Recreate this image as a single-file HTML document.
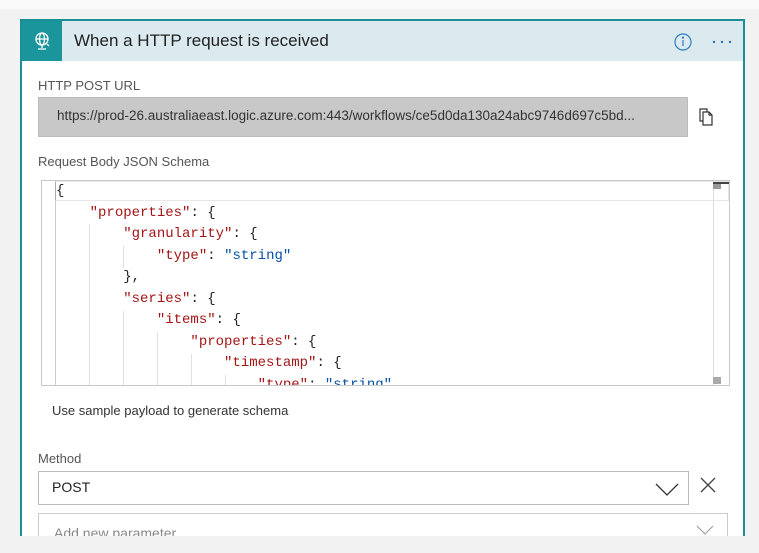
<!DOCTYPE html>
<html><head><meta charset="utf-8"><style>
*{margin:0;padding:0;box-sizing:border-box}
html,body{width:759px;height:553px;overflow:hidden}
body{background:#f2f2f2;position:relative;font-family:"Segoe UI","Liberation Sans",sans-serif}
.top{position:absolute;left:0;top:0;width:759px;height:9px;background:#fafafa}
.card{position:absolute;left:20px;top:19px;width:725px;height:517px;background:#fff;border:2px solid #1b8f96;border-bottom:none;overflow:hidden}
.hdr{position:absolute;left:0;top:0;width:721px;height:40px;background:#dbeaee}
.ico{position:absolute;left:0;top:0;width:40px;height:40px;background:#1b959c}
.title{position:absolute;left:52px;top:10px;font-size:17px;color:#222}
.abs{position:absolute}
.lbl{font-size:13px;color:#555}
.url{left:16px;top:76px;width:650px;height:40px;background:#c8c8c8;border:1px solid #bbb;font-size:13.5px;color:#333;padding:10px 0 0 18px;white-space:nowrap;overflow:hidden}
.ed{left:19px;top:159px;width:689px;height:206px;border:1px solid #c8c8c8;overflow:hidden;font-family:"Liberation Mono",monospace;font-size:14px}
.ln{position:absolute;left:14px;height:21.5px;line-height:21.5px;white-space:pre;color:#222}
.k{color:#a31515}.s{color:#0451a5}
.g{position:absolute;width:1px;background:#e0e0e0}
.sel{left:16px;top:450px;width:651px;height:34px;border:1px solid #bbb;font-size:14px;padding:7px 0 0 13px;color:#222}
.add{left:16px;top:492px;width:690px;height:40px;border:1px solid #ccc;font-size:14px;padding:11px 0 0 15px;color:#888}
</style></head><body>
<div class="top"></div>
<div class="card">
 <div class="hdr">
  <div class="ico"><svg width="40" height="40" viewBox="0 0 40 40" fill="none" stroke="#fff" stroke-width="1.3"><circle cx="20" cy="18" r="6"/><ellipse cx="20" cy="18" rx="2.5" ry="6"/><line x1="14" y1="18" x2="26" y2="18"/><path d="M20 24v3M16 28h8M25 23l2 2"/></svg></div>
  <div class="title">When a HTTP request is received</div>
  <svg class="abs" style="left:652px;top:12px" width="18" height="18" viewBox="0 0 18 18" fill="none" stroke="#2f7bc0" stroke-width="1.2"><circle cx="9" cy="9" r="8"/><line x1="9" y1="7" x2="9" y2="13"/><circle cx="9" cy="4.6" r=".5" fill="#2f7bc0"/></svg>
  <svg class="abs" style="left:690px;top:19px" width="22" height="4" viewBox="0 0 22 4" fill="#2f6fb0"><circle cx="2" cy="2" r="1.2"/><circle cx="10" cy="2" r="1.2"/><circle cx="18" cy="2" r="1.2"/></svg>
 </div>
 <div class="abs lbl" style="left:16px;top:57px">HTTP POST URL</div>
 <div class="abs url">https://prod-26.australiaeast.logic.azure.com:443/workflows/ce5d0da130a24abc9746d697c5bd...</div>
 <svg class="abs" style="left:676px;top:86px" width="18" height="20" viewBox="0 0 18 20" fill="none" stroke="#333" stroke-width="1.2"><path d="M2 2h7v12H2z"/><path d="M5 5h6l3 3v10H5z" fill="#fff"/><path d="M11 5v3h3"/></svg>
 <div class="abs lbl" style="left:16px;top:133px">Request Body JSON Schema</div>
 <div class="abs ed">
  <div class="abs" style="left:13px;top:0;width:674px;height:20px;border:1px solid #e6e6e6;border-left:1px solid #aaa"></div>
  <div class="g" style="left:13px;top:20px;height:186px;background:#ccc"></div>
  <div class="g" style="left:47px;top:43px;height:163px"></div>
  <div class="g" style="left:81px;top:65px;height:22px"></div>
  <div class="g" style="left:81px;top:130px;height:76px"></div>
  <div class="g" style="left:115px;top:151px;height:55px"></div>
  <div class="g" style="left:149px;top:173px;height:33px"></div>
  <div class="g" style="left:183px;top:194px;height:12px"></div>
  <div class="ln" style="top:0">{</div>
  <div class="ln" style="top:21.5px">    <span class="k">"properties"</span>: {</div>
  <div class="ln" style="top:43px">        <span class="k">"granularity"</span>: {</div>
  <div class="ln" style="top:64.5px">            <span class="k">"type"</span>: <span class="s">"string"</span></div>
  <div class="ln" style="top:86px">        },</div>
  <div class="ln" style="top:107.5px">        <span class="k">"series"</span>: {</div>
  <div class="ln" style="top:129px">            <span class="k">"items"</span>: {</div>
  <div class="ln" style="top:150.5px">                <span class="k">"properties"</span>: {</div>
  <div class="ln" style="top:172px">                    <span class="k">"timestamp"</span>: {</div>
  <div class="ln" style="top:193.5px">                        <span class="k">"type"</span>: <span class="s">"string"</span></div>
  <div class="g" style="left:671px;top:0;height:206px;background:#ddd"></div>
  <div class="abs" style="left:671px;top:2px;width:8px;height:6px;background:#999"></div>
  <div class="abs" style="left:671px;top:1px;width:16px;height:2px;background:#444"></div>
  <div class="abs" style="left:671px;top:196px;width:8px;height:7px;background:#aaa"></div>
 </div>
 <div class="abs" style="left:30px;top:382px;font-size:13px;color:#333">Use sample payload to generate schema</div>
 <div class="abs lbl" style="left:16px;top:430px">Method</div>
 <div class="abs sel">POST</div>
 <svg class="abs" style="left:632px;top:460px" width="26" height="16" viewBox="0 0 26 16" fill="none" stroke="#333" stroke-width="1.3"><path d="M2 3l11 11 11-11"/></svg>
 <svg class="abs" style="left:678px;top:456px" width="16" height="16" viewBox="0 0 16 16" stroke="#444" stroke-width="1.3"><path d="M1 1l14 14M15 1L1 15"/></svg>
 <div class="abs add">Add new parameter</div>
 <svg class="abs" style="left:674px;top:504px" width="18" height="10" viewBox="0 0 18 10" fill="none" stroke="#999" stroke-width="1"><path d="M1 1l8 8 8-8"/></svg>
</div>
</body></html>
